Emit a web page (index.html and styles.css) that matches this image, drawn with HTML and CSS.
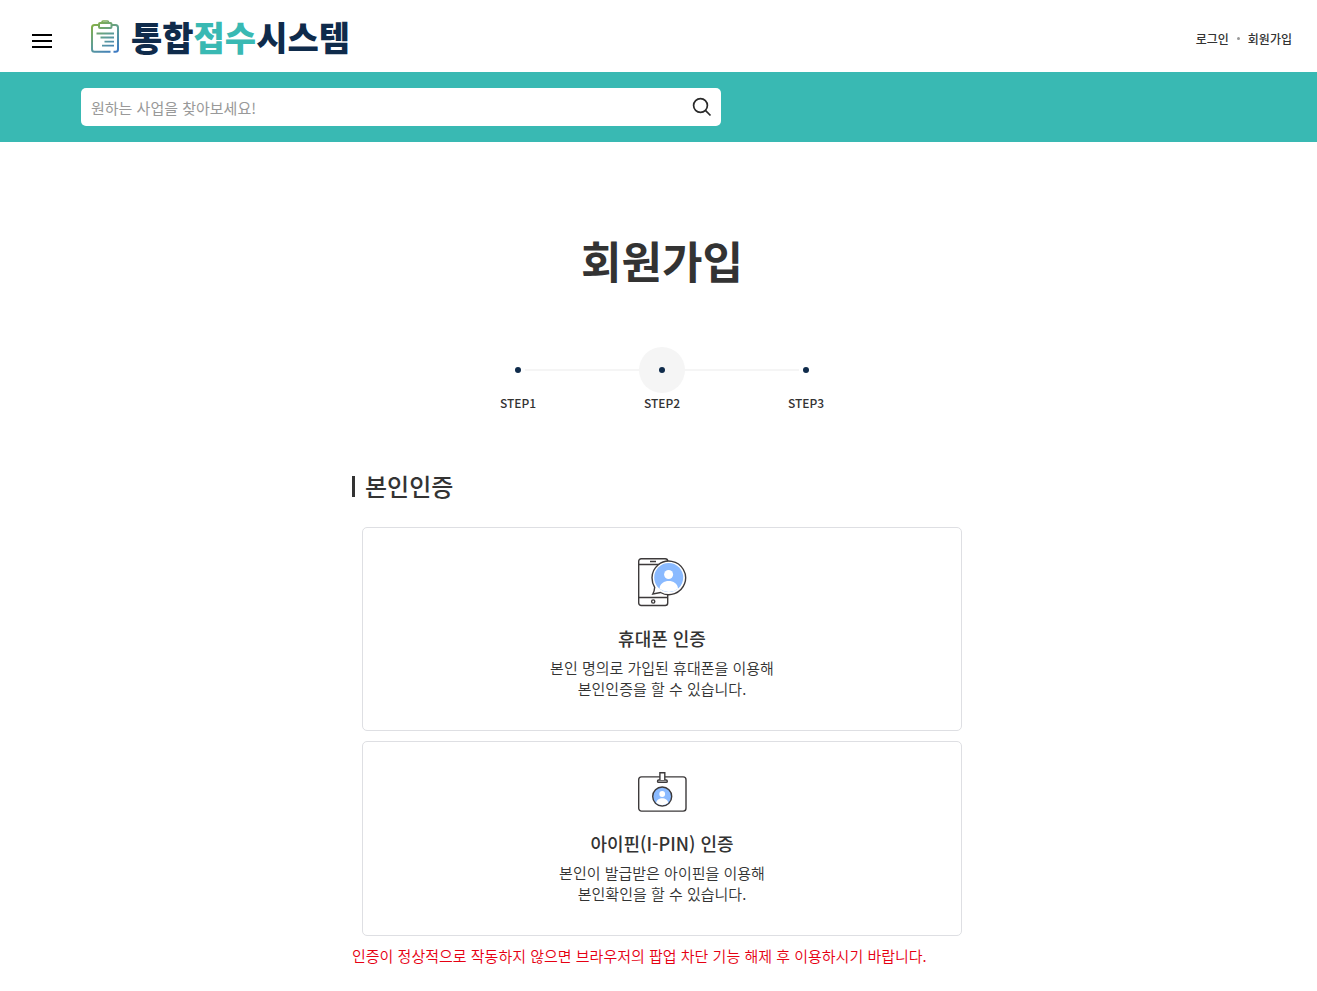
FILE: index.html
```html
<!DOCTYPE html>
<html lang="ko">
<head>
<meta charset="utf-8">
<meta name="viewport" content="width=device-width, initial-scale=1">
<title>회원가입 - 통합접수시스템</title>
<link rel="stylesheet" href="styles.css">
</head>
<body>
<header class="header">
  <button class="menu-button" type="button" aria-label="메뉴">
    <span class="menu-line"></span><span class="menu-line"></span><span class="menu-line"></span>
  </button>
  <a class="logo" href="#">
    <svg class="logo-icon" width="30" height="34" viewBox="0 0 30 34" fill="none" stroke="url(#logo-gradient)" stroke-width="2" aria-hidden="true">
      <defs>
        <linearGradient id="logo-gradient" gradientUnits="userSpaceOnUse" x1="4" y1="2" x2="26" y2="33">
          <stop offset="0" stop-color="#86b042"/>
          <stop offset="0.5" stop-color="#5e9d96"/>
          <stop offset="1" stop-color="#3b78c4"/>
        </linearGradient>
      </defs>
      <path d="M8.500 5H4.500Q2 5 2 7.500V29.300Q2 31.800 4.500 31.800H20.500M23.500 31.800H25.500Q28 31.800 28 29.300V7.500Q28 5 25.500 5H21.500"/>
      <rect x="9" y="3" width="12.500" height="5" rx="1"/>
      <path d="M12 2Q12 1 13 1H17.500Q18.500 1 18.500 2" stroke-width="1.600"/>
      <path d="M6.500 13.500H24M10.500 17.500H24M14.500 21.700H24M12 25.700H24" stroke-width="1.800"/>
    </svg>
    <span class="logo-text">통합<span class="logo-accent">접수</span>시스템</span>
  </a>
  <nav class="user-nav">
    <a href="#">로그인</a>
    <span class="nav-dot"></span>
    <a href="#">회원가입</a>
  </nav>
</header>

<div class="search-bar">
  <form class="search-form" role="search">
    <input class="search-input" type="text" placeholder="원하는 사업을 찾아보세요!" aria-label="사업 검색">
    <button class="search-button" type="button" aria-label="검색">
      <svg width="20" height="20" viewBox="0 0 20 20" fill="none" stroke="#292929" stroke-width="1.700" aria-hidden="true">
        <circle cx="8.500" cy="8.500" r="6.900"/>
        <path d="M13.400 13.400L18.500 18.500"/>
      </svg>
    </button>
  </form>
</div>

<main class="main">
  <h1 class="page-title">회원가입</h1>
  <ol class="steps">
    <li class="step"><span class="step-marker"></span>STEP1</li>
    <li class="step step-current" aria-current="step"><span class="step-marker"></span>STEP2</li>
    <li class="step"><span class="step-marker"></span>STEP3</li>
  </ol>

  <section class="verify">
    <h2 class="section-title">본인인증</h2>
    <div class="cards">
      <a class="card" href="#">
        <svg width="50" height="49" viewBox="0 0 50 49" fill="none" stroke="#3d3a3b" stroke-width="1.400" aria-hidden="true">
          <rect x="1.700" y="0.700" width="29" height="46.800" rx="2.500"/>
          <path d="M1.700 6.500H30.700M1.700 39.500H30.700M13 3.500H19"/>
          <circle cx="16.200" cy="43.500" r="1.600"/>
          <path d="M17.700 29.300Q15 25 15 19.800A16.800 16.800 0 1 1 23.500 34.500L15.800 36Q17.500 33 17.700 29.300Z" fill="#fff"/>
          <circle cx="31.700" cy="19.500" r="14.500" fill="#8abaff" stroke="none"/>
          <circle cx="31.600" cy="16.500" r="4.500" fill="#fff" stroke="none"/>
          <path d="M22.500 30.700C23 20.500 40.500 20.500 41 30.700Q32 37.500 22.500 30.700Z" fill="#fff" stroke="none"/>
        </svg>
        <strong class="card-title">휴대폰 인증</strong>
        <span class="card-text">본인 명의로 가입된 휴대폰을 이용해<br>본인인증을 할 수 있습니다.</span>
      </a>
      <a class="card" href="#">
        <svg width="50" height="40" viewBox="0 0 50 40" fill="none" stroke="#3d3a3b" stroke-width="1.400" aria-hidden="true">
          <rect x="1.700" y="4.900" width="47.300" height="34.200" rx="2.800"/>
          <rect x="20.500" y="8" width="9.800" height="2.300" rx="1.150" fill="#fff"/>
          <path d="M22.900 8V0.700H27.800V8" fill="#fff"/>
          <circle cx="25.200" cy="24.500" r="9.500" fill="#8abaff"/>
          <circle cx="25.200" cy="22" r="2.900" fill="#fff" stroke="none"/>
          <path d="M19.200 31C19.500 24.500 30.900 24.500 31.200 31Q25.200 35.300 19.200 31Z" fill="#fff" stroke="none"/>
        </svg>
        <strong class="card-title">아이핀(I-PIN) 인증</strong>
        <span class="card-text">본인이 발급받은 아이핀을 이용해<br>본인확인을 할 수 있습니다.</span>
      </a>
    </div>
    <p class="notice">인증이 정상적으로 작동하지 않으면 브라우저의 팝업 차단 기능 해제 후 이용하시기 바랍니다.</p>
  </section>
</main>
</body>
</html>
```
FILE: styles.css
```css
* {
  box-sizing: border-box;
}

body {
  margin: 0;
  background: #fff;
  color: #333;
  font-family: "Noto Sans CJK KR", "Noto Sans", sans-serif;
  font-size: 15px;
  line-height: 21px;
}

a {
  color: inherit;
  text-decoration: none;
}

button {
  border: 0;
  padding: 0;
  background: none;
  cursor: pointer;
}

.header {
  display: flex;
  align-items: center;
  height: 72px;
  padding: 0 25px 0 32px;
}

.menu-button {
  display: flex;
  flex-direction: column;
  gap: 4px;
  width: 20px;
  padding-top: 10px;
}

.menu-line {
  height: 2px;
  background: #000;
}

.logo {
  display: flex;
  align-items: center;
  gap: 11px;
  margin-left: 38px;
  padding-top: 2px;
}

.logo-text {
  color: #0f2b4b;
  font-size: 34px;
  font-weight: 900;
  line-height: 40px;
}

.logo-accent {
  color: #39b9b3;
}

.user-nav {
  display: flex;
  align-items: center;
  gap: 8px;
  margin-left: auto;
  padding-top: 5px;
  font-size: 12px;
  font-weight: 500;
}

.nav-dot {
  width: 3px;
  height: 3px;
  border-radius: 50%;
  background: #999;
}

.search-bar {
  padding: 16px 81px;
  background: #39b9b3;
}

.search-form {
  display: flex;
  align-items: center;
  max-width: 640px;
  height: 38px;
  padding: 0 9px 0 10px;
  border-radius: 5px;
  background: #fff;
}

.search-input {
  flex: 1;
  min-width: 0;
  border: 0;
  padding: 0;
  background: none;
  color: #333;
  font: inherit;
  outline: 0;
}

.search-input::placeholder {
  color: #999;
  opacity: 1;
}

.search-button {
  display: flex;
}

.main {
  padding: 88px 0 24px 7px;
}

.page-title {
  margin: 0;
  color: #333;
  font-size: 44px;
  font-weight: 700;
  line-height: 60px;
  text-align: center;
}

.steps {
  display: flex;
  justify-content: center;
  margin: 57px 0 0;
  padding: 0;
  list-style: none;
}

.step {
  display: flex;
  position: relative;
  flex-direction: column;
  align-items: center;
  width: 144px;
  font-size: 12px;
  font-weight: 500;
  line-height: 20px;
}

.step-marker {
  display: flex;
  align-items: center;
  justify-content: center;
  z-index: 1;
  width: 46px;
  height: 46px;
  border-radius: 50%;
}

.step-marker::before {
  content: "";
  width: 6px;
  height: 6px;
  border-radius: 50%;
  background: #0f2b4b;
}

.step-current .step-marker {
  background: #f5f5f5;
}

/* Connectors on both sides of the current step. */
.step-current::before {
  content: "";
  position: absolute;
  top: 22px;
  left: -65px;
  right: -65px;
  height: 2px;
  background: #f5f5f5;
}

.verify {
  max-width: 620px;
  margin: 61px auto 0;
}

.section-title {
  display: flex;
  align-items: center;
  gap: 10px;
  margin: 0;
  font-size: 24px;
  font-weight: 500;
  line-height: 24px;
}

.section-title::before {
  content: "";
  width: 3px;
  height: 21px;
  background: #333;
}

.cards {
  display: grid;
  gap: 10px;
  padding: 29px 10px 9px;
}

.card {
  display: flex;
  flex-direction: column;
  align-items: center;
  padding: 30px 30px 31px;
  border: 1px solid #dedfe3;
  border-radius: 5px;
  text-align: center;
}

.card-title {
  margin: 19px 0 7px;
  font-size: 18px;
  font-weight: 500;
  line-height: 24px;
}

.card-text,
.notice {
  font-weight: 350;
}

.notice {
  margin: 0;
  color: #e60012;
}
```
